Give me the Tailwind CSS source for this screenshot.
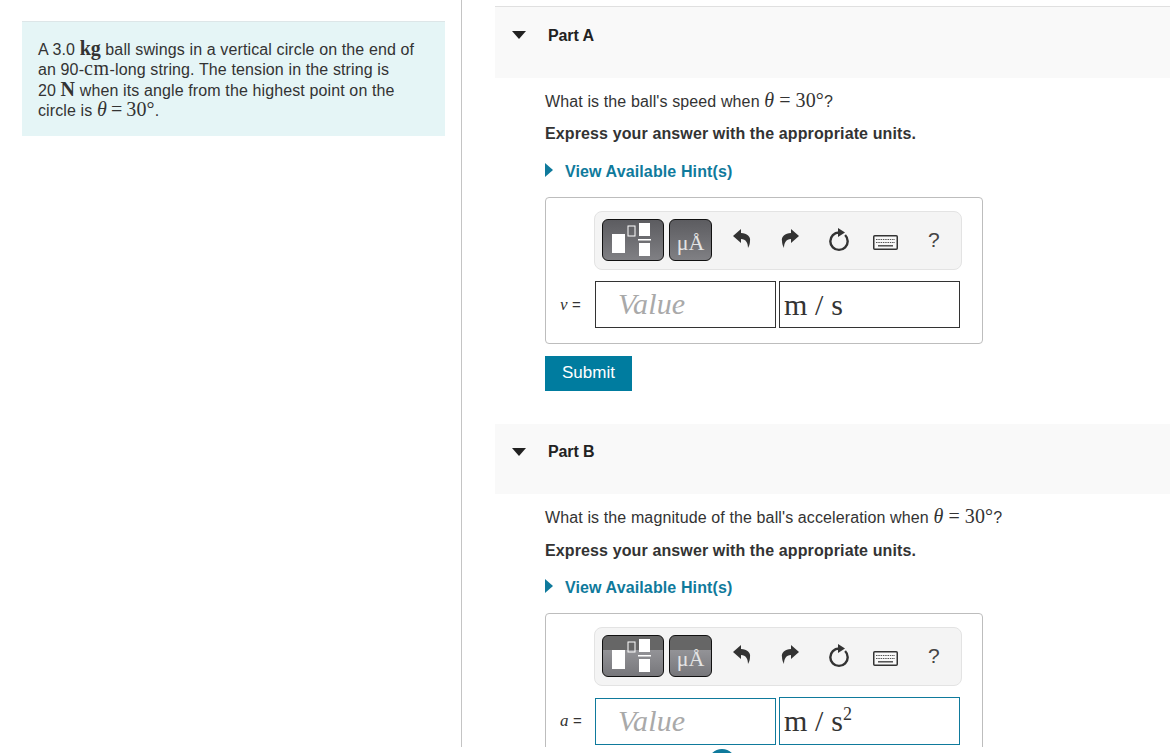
<!DOCTYPE html>
<html lang="en">
<head>
    <meta charset="UTF-8">
    <title>Part A and Part B</title>
    <script src="https://cdn.jsdelivr.net/npm/@tailwindcss/browser@4"></script>
</head>
<body class="bg-white text-[#333] font-['Liberation_Sans',Arial,sans-serif] text-[16px] tracking-[0.12px] overflow-hidden">

<div class="relative w-[1170px] h-[753px] overflow-hidden">
    <div class="flex h-[747px] overflow-hidden">

        <!-- Left column: problem statement -->
        <div class="w-[462px] shrink-0 border-r border-[#c4c4c4] pt-[21px] pl-[22px]">
            <div class="w-[423px] h-[115px] bg-[#e5f5f6] border-t border-[#dde6e8] pt-[18px] pl-[16px]">
                <p class="h-[20.3px] leading-[20.3px]">A 3.0 <span class="font-['Liberation_Serif',serif] text-[20px] leading-[0] font-bold tracking-normal">kg</span> ball swings in a vertical circle on the end of</p>
                <p class="h-[20.3px] leading-[20.3px]">an 90-<span class="font-['Liberation_Serif',serif] text-[20px] leading-[0] tracking-[0.5px]">cm</span>-long string. The tension in the string is</p>
                <p class="h-[20.3px] leading-[20.3px]">20 <span class="font-['Liberation_Serif',serif] text-[20px] leading-[0] font-bold">N</span> when its angle from the highest point on the</p>
                <p class="h-[20.3px] leading-[20.3px]">circle is <span class="font-['Liberation_Serif',serif] text-[20px] leading-[0]"><i>θ</i><span class="mx-[4px]">=</span>30°</span>.</p>
            </div>
        </div>

        <!-- Right column: parts -->
        <div class="flex-1 pt-[6px] pl-[33px] min-w-0">

            <!-- Part A -->
            <div class="h-[72px] bg-[#f9f9f9] border-t border-[#e0e0e0] flex items-start pt-[17px]">
                <svg class="w-[14px] h-[8px] ml-[17px] mt-[7px]" viewBox="0 0 14 8"><path d="M0 0h14L7 8z" fill="#222"/></svg>
                <span class="ml-[22px] font-bold text-[#222] tracking-[-0.1px]">Part A</span>
            </div>
            <div class="pl-[50px]">
                <p class="mt-[14px] h-[20px] leading-[20px]">What is the ball's speed when <span class="font-['Liberation_Serif',serif] text-[20px] leading-[0]"><i>θ</i><span class="mx-[5px]">=</span>30°</span>?</p>
                <p class="mt-[12px] h-[20px] leading-[20px] font-bold">Express your answer with the appropriate units.</p>
                <a class="mt-[18px] h-[20px] flex items-center font-bold text-[#0f7a9c]">
                    <svg class="w-[8px] h-[14px] mb-[4px]" viewBox="0 0 8 14"><path d="M0 0l8 7-8 7z" fill="#0f7a9c"/></svg>
                    <span class="ml-[12px]">View Available Hint(s)</span>
                </a>

                <div class="mt-[15px] w-[438px] h-[147px] border border-[#bdbdbd] rounded-[4px] pt-[13px] pl-[14px]">
                    <div class="ml-[34px] w-[368px] h-[59px] bg-[#f4f4f4] border border-[#e3e3e3] rounded-[8px] flex items-start pt-[7px] pl-[7px]">
                        <div class="w-[62px] h-[42px] rounded-[6px] border border-[#111] bg-gradient-to-b from-[#5c5c60] to-[#808084]">
                            <svg class="w-[60px] h-[40px]" viewBox="0 0 60 40">
                                <rect x="9" y="14" width="13" height="19" fill="#fff"/>
                                <rect x="25" y="6" width="7" height="10" fill="none" stroke="#fff"/>
                                <rect x="36" y="3" width="11" height="13" fill="#fff"/>
                                <rect x="35" y="19" width="13" height="1.500" fill="#fff"/>
                                <rect x="36" y="23" width="11" height="13" fill="#fff"/>
                            </svg>
                        </div>
                        <div class="ml-[5px] w-[43px] h-[42px] rounded-[6px] border border-[#111] bg-gradient-to-b from-[#5c5c60] to-[#808084] flex items-end justify-center pb-[7px] font-['Liberation_Serif',serif] text-[22px] leading-[20px] tracking-normal text-[#e4e4e4]">μÅ</div>

                        <svg class="ml-[21px] mt-[10px] w-[18px] h-[20px]" viewBox="0 0 18 20"><path d="M0 7L8 0V4C14 4 18 8 17 12C17 15 16 17 15 19C15 14 13 10 8 10V14Z" fill="#333"/></svg>
                        <svg class="ml-[30px] mt-[10px] w-[18px] h-[20px]" viewBox="0 0 18 20"><path d="M18 7L10 0V4C4 4 0 8 1 12C1 15 2 17 3 19C3 14 5 10 10 10V14Z" fill="#333"/></svg>
                        <svg class="ml-[29px] mt-[9px] w-[22px] h-[24px]" viewBox="0 0 22 24"><path d="M11 4.500a8.700 8.700 0 1 0 8.700 8.700c0-2.400-1-4.600-2.600-6.200" fill="none" stroke="#333" stroke-width="2.400"/><path d="M10 0l7 4.500-7 4.500z" fill="#333"/></svg>
                        <svg class="ml-[23px] mt-[16px] w-[25px] h-[15px]" viewBox="0 0 25 15">
                            <rect x="0.750" y="0.750" width="23.500" height="13.500" rx="1" fill="#f8f8f8" stroke="#333" stroke-width="1.500"/>
                            <path d="M3 4.500h19M3 7.500h19" stroke="#555" stroke-dasharray="1.500 .8"/>
                            <path d="M5 10.800h15" stroke="#444" stroke-width="1.400"/>
                        </svg>
                        <span class="ml-[30px] mt-[11px] text-[21px] leading-[20px] text-[#444]">?</span>
                    </div>
                    <div class="mt-[11px] flex items-center">
                        <span class="w-[35px] shrink-0 text-[15px]"><i class="font-['Liberation_Serif',serif] text-[17px]">v</i> =</span>
                        <div class="w-[181px] h-[47px] border border-[#333] pl-[22px] font-['Liberation_Serif',serif] italic text-[30px] leading-[44px] text-[#a9a9a9] tracking-[0.1px]">Value</div>
                        <div class="ml-[3px] w-[181px] h-[47px] border border-[#333] pl-[4px] font-['Liberation_Serif',serif] text-[30px] leading-[45px] text-[#333]">m / s</div>
                    </div>
                </div>

                <button class="mt-[12px] block w-[87px] h-[35px] bg-[#007c9f] text-white text-[17px] tracking-normal pb-[2px]">Submit</button>
            </div>

            <!-- Part B -->
            <div class="mt-[33px] h-[70px] bg-[#f9f9f9] flex items-start pt-[16px]">
                <svg class="w-[14px] h-[8px] ml-[17px] mt-[8px]" viewBox="0 0 14 8"><path d="M0 0h14L7 8z" fill="#222"/></svg>
                <span class="ml-[22px] font-bold text-[#222] tracking-[-0.1px]">Part B</span>
            </div>
            <div class="pl-[50px]">
                <p class="mt-[14px] h-[20px] leading-[20px]">What is the magnitude of the ball's acceleration when <span class="font-['Liberation_Serif',serif] text-[20px] leading-[0]"><i>θ</i><span class="mx-[5px]">=</span>30°</span>?</p>
                <p class="mt-[13px] h-[20px] leading-[20px] font-bold">Express your answer with the appropriate units.</p>
                <a class="mt-[17px] h-[20px] flex items-center font-bold text-[#0f7a9c]">
                    <svg class="w-[8px] h-[14px] mb-[4px]" viewBox="0 0 8 14"><path d="M0 0l8 7-8 7z" fill="#0f7a9c"/></svg>
                    <span class="ml-[12px]">View Available Hint(s)</span>
                </a>

                <div class="mt-[15px] w-[438px] h-[147px] border border-[#bdbdbd] rounded-[4px] pt-[13px] pl-[14px]">
                    <div class="ml-[34px] w-[368px] h-[59px] bg-[#f4f4f4] border border-[#e3e3e3] rounded-[8px] flex items-start pt-[7px] pl-[7px]">
                        <div class="w-[62px] h-[42px] rounded-[6px] border border-[#111] bg-[linear-gradient(#666_0,#666_14px,#939397_14px,#77777b_100%)]">
                            <svg class="w-[60px] h-[40px]" viewBox="0 0 60 40">
                                <rect x="9" y="14" width="13" height="19" fill="#fff"/>
                                <rect x="25" y="6" width="7" height="10" fill="none" stroke="#fff"/>
                                <rect x="36" y="3" width="11" height="13" fill="#fff"/>
                                <rect x="35" y="19" width="13" height="1.500" fill="#fff"/>
                                <rect x="36" y="23" width="11" height="13" fill="#fff"/>
                            </svg>
                        </div>
                        <div class="ml-[5px] w-[43px] h-[42px] rounded-[6px] border border-[#111] bg-[linear-gradient(#666_0,#666_14px,#939397_14px,#77777b_100%)] flex items-end justify-center pb-[7px] font-['Liberation_Serif',serif] text-[22px] leading-[20px] tracking-normal text-[#e4e4e4]">μÅ</div>

                        <svg class="ml-[21px] mt-[10px] w-[18px] h-[20px]" viewBox="0 0 18 20"><path d="M0 7L8 0V4C14 4 18 8 17 12C17 15 16 17 15 19C15 14 13 10 8 10V14Z" fill="#333"/></svg>
                        <svg class="ml-[30px] mt-[10px] w-[18px] h-[20px]" viewBox="0 0 18 20"><path d="M18 7L10 0V4C4 4 0 8 1 12C1 15 2 17 3 19C3 14 5 10 10 10V14Z" fill="#333"/></svg>
                        <svg class="ml-[29px] mt-[9px] w-[22px] h-[24px]" viewBox="0 0 22 24"><path d="M11 4.500a8.700 8.700 0 1 0 8.700 8.700c0-2.400-1-4.600-2.600-6.200" fill="none" stroke="#333" stroke-width="2.400"/><path d="M10 0l7 4.500-7 4.500z" fill="#333"/></svg>
                        <svg class="ml-[23px] mt-[16px] w-[25px] h-[15px]" viewBox="0 0 25 15">
                            <rect x="0.750" y="0.750" width="23.500" height="13.500" rx="1" fill="#f8f8f8" stroke="#333" stroke-width="1.500"/>
                            <path d="M3 4.500h19M3 7.500h19" stroke="#555" stroke-dasharray="1.500 .8"/>
                            <path d="M5 10.800h15" stroke="#444" stroke-width="1.400"/>
                        </svg>
                        <span class="ml-[30px] mt-[11px] text-[21px] leading-[20px] text-[#444]">?</span>
                    </div>
                    <div class="mt-[11px] flex items-end">
                        <span class="w-[35px] shrink-0 text-[15px] self-center"><i class="font-['Liberation_Serif',serif] text-[17px]">a</i> =</span>
                        <div class="w-[181px] h-[47px] border border-[#0f7a9c] pl-[22px] font-['Liberation_Serif',serif] italic text-[30px] leading-[44px] text-[#a9a9a9] tracking-[0.1px]">Value</div>
                        <div class="ml-[3px] w-[181px] h-[48px] border border-[#0f7a9c] pl-[4px] font-['Liberation_Serif',serif] text-[30px] leading-[46px] text-[#333]">m / s<sup class="text-[18px] leading-[0] -top-[11px] relative align-baseline">2</sup></div>
                    </div>
                </div>
            </div>
        </div>
    </div>

    <!-- Floating button peeking in at the bottom edge -->
    <div class="absolute left-[708px] top-[749px] w-[28px] h-[28px] rounded-full bg-[#0f7a9c]"></div>
</div>

</body>
</html>
